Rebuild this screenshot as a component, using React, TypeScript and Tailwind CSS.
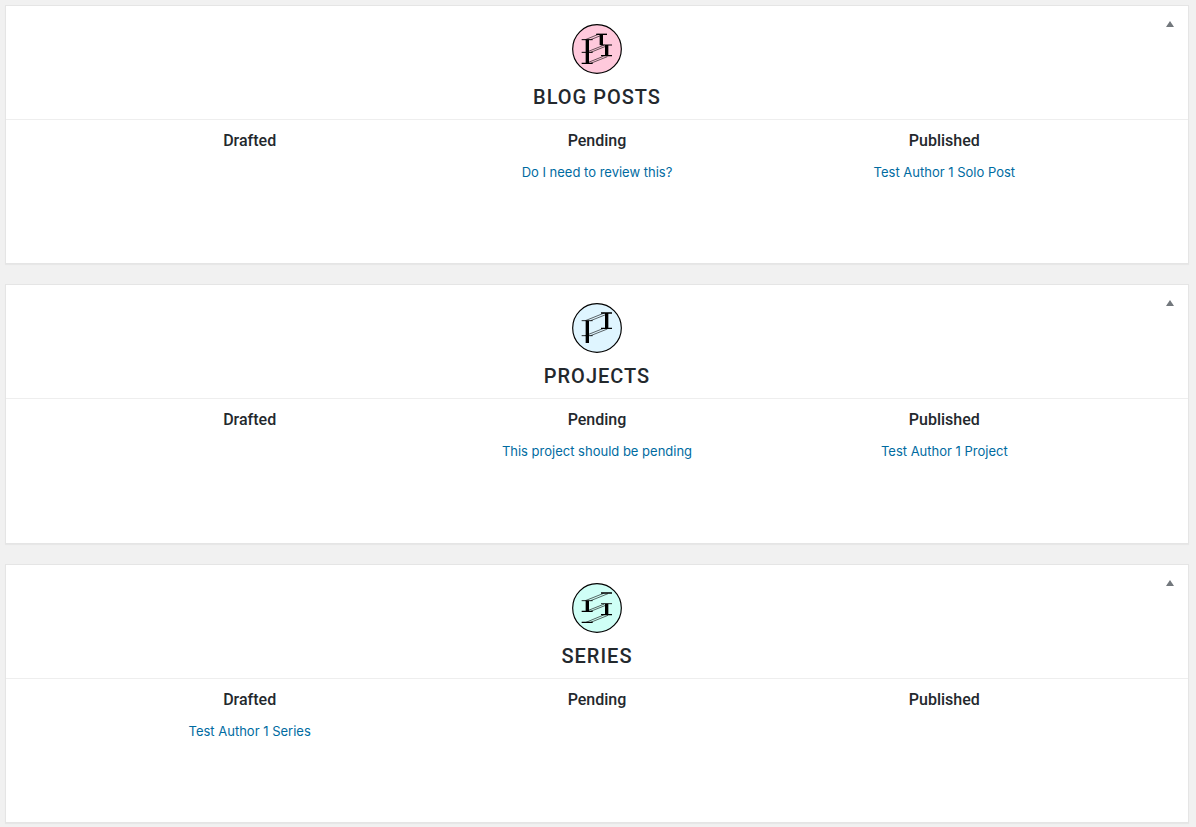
import { useState, type ReactNode } from "react";

type Entry = { title: string };
type Board = {
  name: string;
  fill: string;
  art: ReactNode;
  drafted: Entry[];
  pending: Entry[];
  published: Entry[];
};

const blogArt = (
  <>
    <path strokeWidth="3" d="M47 65H80M47 103H80M91 49H123M104 81H138" />
    <path strokeWidth="4" d="M47 136H80M91 49H123M105 113H138" />
    <path strokeWidth="10" d="M64 65V136M106 49V81M122 81V113" />
    <path strokeWidth="1.8" d="M58 65L97 49M74 65L111 50M60 103L115 81M74 103L124 83M60 136L112 115M74 136L124 116" />
  </>
);

const projectsArt = (
  <>
    <path strokeWidth="2.5" d="M47 71H80M47 116H80" />
    <path strokeWidth="4" d="M105 48H138M105 94H138" />
    <path strokeWidth="10" d="M64 71V138M122 48V94" />
    <path strokeWidth="1.8" d="M58 71L115 48M74 71L124 51M58 116L113 94M74 116L124 96" />
  </>
);

const seriesArt = (
  <>
    <path strokeWidth="2.5" d="M47 71H80M105 80H138" />
    <path strokeWidth="4" d="M47 103H80M47 136H80M105 48H138M105 113H138" />
    <path strokeWidth="10" d="M64 71V103M122 80V113" />
    <path strokeWidth="1.8" d="M58 71L113 49M74 71L126 50M60 103L115 81M74 103L124 83M60 136L113 114M74 136L126 115" />
  </>
);

const boards: Board[] = [
  {
    name: "Blog Posts",
    fill: "#ffc9dc",
    art: blogArt,
    drafted: [],
    pending: [{ title: "Do I need to review this?" }],
    published: [{ title: "Test Author 1 Solo Post" }],
  },
  {
    name: "Projects",
    fill: "#dff5ff",
    art: projectsArt,
    drafted: [],
    pending: [{ title: "This project should be pending" }],
    published: [{ title: "Test Author 1 Project" }],
  },
  {
    name: "Series",
    fill: "#cffff6",
    art: seriesArt,
    drafted: [{ title: "Test Author 1 Series" }],
    pending: [],
    published: [],
  },
];

function Column({ label, entries }: { label: string; entries: Entry[] }) {
  return (
    <div className="text-center">
      <h3 className="font-['Roboto',sans-serif] text-base leading-6 font-medium text-[#23282d]">{label}</h3>
      <ul className="mt-1.5">
        {entries.map((entry) => (
          <li key={entry.title}>
            <a href="#" className="text-[13px] leading-6 text-[#006ba1]">
              {entry.title}
            </a>
          </li>
        ))}
      </ul>
    </div>
  );
}

function Panel({ board }: { board: Board }) {
  const [open, setOpen] = useState(true);
  return (
    <section
      className={`relative border border-[#e5e5e5] bg-white shadow-[0_1px_1px_rgba(0,0,0,0.04)] ${open ? "grow" : ""}`}
    >
      <button
        type="button"
        aria-label={`Toggle ${board.name}`}
        aria-expanded={open}
        onClick={() => setOpen(!open)}
        className="absolute top-0 right-0 flex h-9 w-9 items-center justify-center text-[#72777c]"
      >
        <svg width="8" height="6" viewBox="0 0 8 6" className={open ? "" : "rotate-180"}>
          <path d="M0 6L4 0L8 6Z" fill="currentColor" />
        </svg>
      </button>
      <header className="flex flex-col items-center border-b border-[#eeeeee] pt-[18px] pb-[7px]">
        <svg width="50" height="50" viewBox="18 18 150 150" fill="none" stroke="#000">
          <circle cx="93" cy="93" r="73" fill={board.fill} strokeWidth="3.5" />
          {board.art}
        </svg>
        <h2 className="mt-[9px] font-['Roboto',sans-serif] text-xl leading-[29px] font-medium tracking-[1px] text-[#23282d] uppercase">
          {board.name}
        </h2>
      </header>
      {open && (
        <div className="grid min-h-[143px] grid-cols-3 px-[70px] pt-[9px]">
          <Column label="Drafted" entries={board.drafted} />
          <Column label="Pending" entries={board.pending} />
          <Column label="Published" entries={board.published} />
        </div>
      )}
    </section>
  );
}

export default function App() {
  return (
    <main className="flex min-h-screen flex-col gap-5 bg-[#f1f1f1] pt-[5px] pr-[7px] pb-1 pl-[5px] font-['Inter',sans-serif]">
      {boards.map((board) => (
        <Panel key={board.name} board={board} />
      ))}
    </main>
  );
}
